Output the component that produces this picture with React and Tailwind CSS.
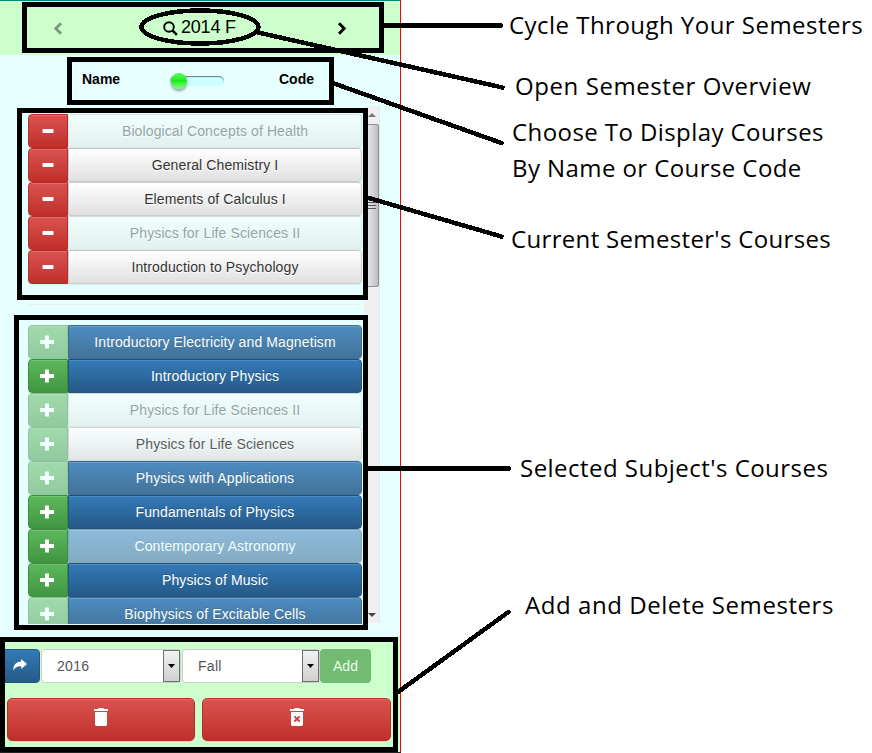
import React from "react";

const current = [
  { name: "Biological Concepts of Health", faded: true },
  { name: "General Chemistry I" },
  { name: "Elements of Calculus I" },
  { name: "Physics for Life Sciences II", faded: true },
  { name: "Introduction to Psychology" },
];

const subject = [
  { name: "Introductory Electricity and Magnetism", look: "blueSoft", soft: true },
  { name: "Introductory Physics", look: "blue" },
  { name: "Physics for Life Sciences II", look: "whiteFaded", soft: true },
  { name: "Physics for Life Sciences", look: "whiteSoft", soft: true },
  { name: "Physics with Applications", look: "blueSoft", soft: true },
  { name: "Fundamentals of Physics", look: "blue" },
  { name: "Contemporary Astronomy", look: "blueFaded" },
  { name: "Physics of Music", look: "blue" },
  { name: "Biophysics of Excitable Cells", look: "blueSoft", soft: true },
];

const whiteBase =
  "border-[#cccccc] bg-linear-to-b from-white to-[#e0e0e0] text-[#333333] shadow-[inset_0_1px_0_rgba(255,255,255,0.15),0_1px_1px_rgba(0,0,0,0.075)] [text-shadow:0_1px_0_#fff]";
const blueBase =
  "border-[#245580] bg-linear-to-b from-[#337ab7] to-[#265a88] text-white shadow-[inset_0_1px_0_rgba(255,255,255,0.15),0_1px_1px_rgba(0,0,0,0.075)] [text-shadow:0_-1px_0_rgba(0,0,0,0.2)]";

const looks = {
  white: whiteBase,
  whiteSoft: whiteBase + " opacity-80",
  whiteFaded: whiteBase + " opacity-45",
  blue: blueBase,
  blueSoft: blueBase + " opacity-85",
  blueFaded: blueBase + " opacity-50",
};

const redBtn =
  "border border-[#b92c28] bg-linear-to-b from-[#d9534f] to-[#c12e2a] shadow-[inset_0_1px_0_rgba(255,255,255,0.15),0_1px_1px_rgba(0,0,0,0.075)]";
const greenBtn =
  "border border-[#3e8f3e] bg-linear-to-b from-[#5cb85c] to-[#419641] shadow-[inset_0_1px_0_rgba(255,255,255,0.15),0_1px_1px_rgba(0,0,0,0.075)]";

function Row({ name, look, action, soft }) {
  return (
    <div className="flex h-[34px] shrink-0">
      <div
        className={
          "flex w-10 items-center justify-center rounded-l " +
          (action === "remove" ? redBtn : greenBtn) +
          (soft ? " opacity-50" : "")
        }
      >
        {action === "remove" ? (
          <svg width="14" height="14" viewBox="0 0 14 14">
            <rect x="1.5" y="5" width="11" height="4" rx="0.7" fill="#fff" />
          </svg>
        ) : (
          <svg width="14" height="14" viewBox="0 0 14 14" className="mr-[2px]">
            <path d="M5 0.5h4v4.5h5v4h-5v4.5h-4v-4.5h-5v-4h5z" fill="#fff" />
          </svg>
        )}
      </div>
      <div
        className={
          "flex w-[294px] items-center justify-center rounded-r border text-sm tracking-[0.11px] " + looks[look]
        }
      >
        {name}
      </div>
    </div>
  );
}

function Select({ value, className }) {
  return (
    <div className={"flex h-[34px] justify-between rounded border border-[#cccccc] bg-white text-sm text-[#555555] " + className}>
      <span className="pt-[6px] pl-[15px] tracking-[0.3px]">{value}</span>
      <span className="flex w-[17px] items-center justify-center border border-[#707070] bg-linear-to-b from-[#f2f2f2] to-[#cfcfcf]">
        <svg width="7" height="4" viewBox="0 0 7 4">
          <path d="M0 0h7L3.5 4z" fill="#000" />
        </svg>
      </span>
    </div>
  );
}

function ScrollBar() {
  return (
    <div className="ml-[2px] flex h-[517px] w-4 flex-col items-center border-r border-[#e6e6e6] bg-[#f0f0f0]">
      <div className="flex h-[18px] items-center">
        <svg width="8" height="4" viewBox="0 0 8 4">
          <path d="M4 0l4 4H0z" fill="#777" />
        </svg>
      </div>
      <div className="flex h-[163px] w-[15px] flex-col items-center justify-center gap-[2px] rounded-[2px] border border-[#8f8f93] bg-linear-to-r from-[#f2f2f2] via-[#d8d8dc] to-[#bcbcc2]">
        <i className="h-px w-[8px] bg-[#555]" />
        <i className="h-px w-[8px] bg-[#555]" />
        <i className="h-px w-[8px] bg-[#555]" />
      </div>
      <div className="mt-auto flex h-4 items-center">
        <svg width="8" height="4" viewBox="0 0 8 4">
          <path d="M0 0h8L4 4z" fill="#444" />
        </svg>
      </div>
    </div>
  );
}

const noteBase =
  "absolute whitespace-pre text-black font-['Open_Sans','Noto_Sans',sans-serif] text-[24px] leading-[36px] ";

export default function App() {
  return (
    <div className="relative h-[753px] w-[872px] overflow-hidden bg-white font-['Liberation_Sans',Arial,sans-serif]">
      <div className="flex h-[753px] w-[401px] flex-col border-r border-[#ff0000] bg-[#e6ffff]">
        <header className="flex h-[55px] shrink-0 items-center border-t border-[#008b80] bg-[#ccffcc] text-black">
          <svg width="10" height="13" viewBox="0 0 10 13" className="ml-[53px] opacity-40">
            <path d="M8 1.2L2.8 6.5 8 11.8" fill="none" stroke="#000" strokeWidth="2.8" />
          </svg>
          <div className="ml-[100px] flex w-[74px] items-center gap-1">
            <svg width="15" height="15" viewBox="0 0 14 14" className="-mr-px shrink-0">
              <circle cx="5.6" cy="5.6" r="4.5" fill="none" stroke="#000" strokeWidth="1.8" />
              <path d="M8.8 8.8L13 13" stroke="#000" strokeWidth="2.4" />
            </svg>
            <span className="-mt-[2px] text-[18px] leading-5 tracking-[-0.2px] whitespace-nowrap">2014 F</span>
          </div>
          <svg width="10" height="13" viewBox="0 0 10 13" className="ml-[100px]">
            <path d="M2 1.2L7.2 6.5 2 11.8" fill="none" stroke="#000" strokeWidth="2.9" />
          </svg>
        </header>

        <div className="flex h-[51px] shrink-0 pl-[82px] text-sm leading-5 font-bold text-black">
          <span className="mt-[14px] w-[88px]">Name</span>
          <div className="relative mt-[21px] h-[10px] w-[54px] rounded-full bg-[#ccffff] shadow-[inset_0_1px_1px_#5a8080]">
            <i className="absolute top-[-3px] left-[1px] size-4 rounded-full bg-linear-to-b from-[#5cf85c] via-[#0cec0c] to-[#7dfa7d] shadow-[0_2px_3px_rgba(0,0,0,0.4)]" />
          </div>
          <span className="mt-[14px] ml-[55px]">Code</span>
        </div>

        <main className="flex h-[531px] shrink-0 pl-[28px]">
          <div className="flex h-[518px] w-[334px] flex-col overflow-hidden pt-2">
            {current.map((c) => (
              <Row key={c.name} name={c.name} look={c.faded ? "whiteFaded" : "white"} action="remove" />
            ))}
            <hr className="my-5 w-full shrink-0 border-[#eeeeee]" />
            {subject.map((c) => (
              <Row key={c.name} {...c} action="add" />
            ))}
          </div>
          <ScrollBar />
        </main>

        <footer className="flex grow flex-col bg-[#ccffcc] pt-3">
          <div className="flex">
            <div className="flex h-[34px] w-10 items-center justify-center rounded-r border border-[#245580] bg-linear-to-b from-[#337ab7] to-[#265a88]">
              <svg width="14" height="12" viewBox="0 0 14 12" className="mb-[3px]">
                <path d="M8.2 0L14 5 8.2 10V7.4C4.8 7 2.2 8 0.6 11.4-0.4 7 3 2.8 8.2 2.6z" fill="#fff" />
              </svg>
            </div>
            <Select value="2016" className="ml-px w-[140px]" />
            <Select value="Fall" className="ml-px w-[138px]" />
            <div className="flex h-[34px] w-[51px] items-center justify-center rounded bg-[#73bb73] text-sm text-[#e6ffe6]">
              Add
            </div>
          </div>
          <div className="mt-[15px] flex gap-[7px] pl-[7px]">
            <div className={"flex h-[43px] w-[188px] justify-center rounded-[5px] pt-[9px] " + redBtn}>
              <svg width="14" height="18" viewBox="0 0 14 18">
                <path d="M0 1h4.5V0h5v1H14v2H0zM1 4h12v13l-1 1H2l-1-1z" fill="#fff" />
              </svg>
            </div>
            <div className={"flex h-[43px] w-[189px] justify-center rounded-[5px] pt-[9px] " + redBtn}>
              <svg width="14" height="18" viewBox="0 0 14 18">
                <path d="M0 1h4.5V0h5v1H14v2H0zM1 4h12v13l-1 1H2l-1-1z" fill="#fff" />
                <path d="M4.4 8.3l5.2 5.2M9.6 8.3l-5.2 5.2" stroke="#cb3f3b" strokeWidth="1.8" />
              </svg>
            </div>
          </div>
        </footer>
      </div>

      <svg
        width="872"
        height="753"
        viewBox="0 0 872 753"
        className="absolute inset-0"
        fill="none"
        stroke="#000"
        strokeWidth="5"
        shapeRendering="crispEdges"
      >
        <rect x="24.5" y="4.5" width="357" height="46" />
        <ellipse cx="200" cy="27" rx="58.5" ry="16.5" strokeWidth="4.5" />
        <rect x="69.5" y="59.5" width="262" height="43" />
        <rect x="19.5" y="110.5" width="346" height="187" />
        <rect x="16.5" y="317.5" width="349" height="310" />
        <rect x="2.5" y="639.5" width="393" height="110" />
        <path d="M0 752.5H401" stroke="#222" strokeWidth="1" />
        <g strokeLinecap="round">
          <path d="M384 25.5H500.5" />
          <path d="M258 32.5L502.5 87.5" strokeWidth="4.5" />
          <path d="M334 83.5L501.5 143" strokeWidth="4.5" />
          <path d="M367 197.5L501.5 236.5" strokeWidth="4.5" />
          <path d="M367 468.5H508.5" />
          <path d="M398 692L508.5 612" strokeWidth="4.5" />
        </g>
      </svg>

      <p className={noteBase + "top-[7px] left-[509px] tracking-[0.47px]"}>Cycle Through Your Semesters</p>
      <p className={noteBase + "top-[68px] left-[515px] tracking-[0.58px]"}>Open Semester Overview</p>
      <p className={noteBase + "top-[114px] left-[512px] tracking-[0.42px]"}>{"Choose To Display Courses\nBy Name or Course Code"}</p>
      <p className={noteBase + "top-[221px] left-[511px] tracking-[0.33px]"}>Current Semester's Courses</p>
      <p className={noteBase + "top-[450px] left-[520px] tracking-[0.47px]"}>Selected Subject's Courses</p>
      <p className={noteBase + "top-[587px] left-[525px] tracking-[0.56px]"}>Add and Delete Semesters</p>
    </div>
  );
}
